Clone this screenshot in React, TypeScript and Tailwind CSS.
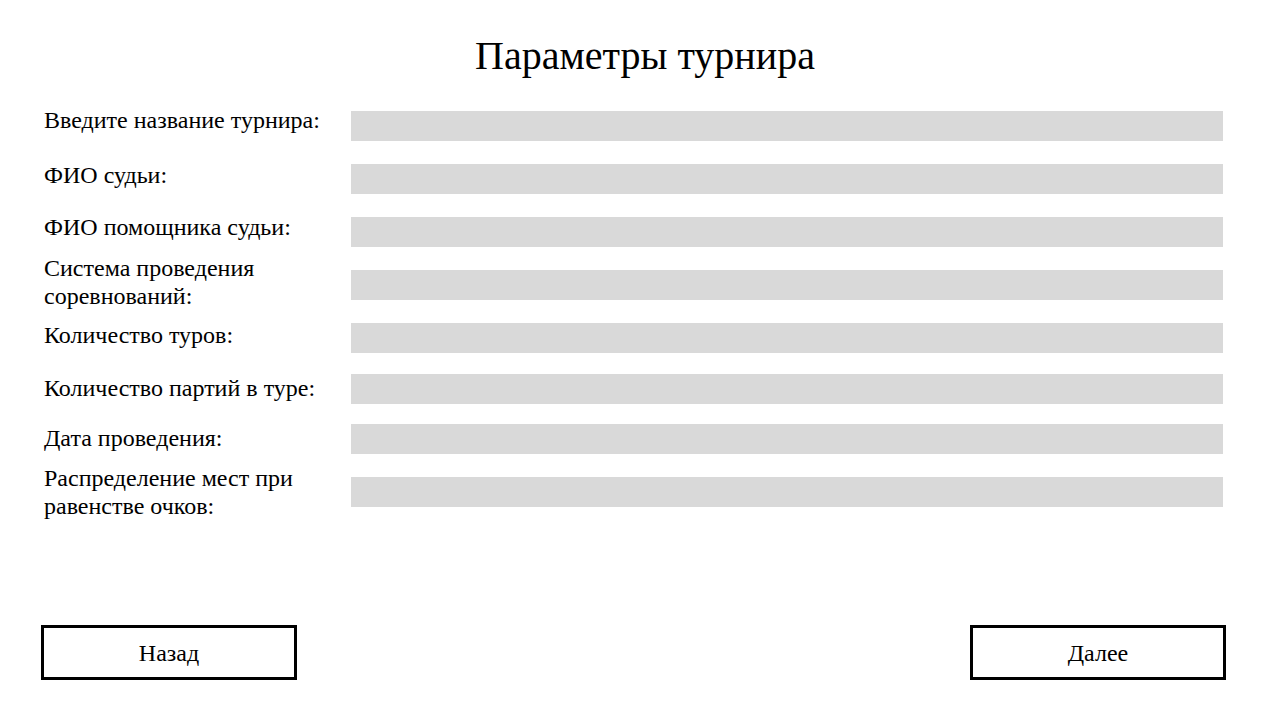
const fields = [
  { label: 'Введите название турнира:', row: 'mt-[27px]', bar: 'mt-[5px]' },
  { label: 'ФИО судьи:', row: 'mt-[20px]', bar: 'mt-[3px]' },
  { label: 'ФИО помощника судьи:', row: 'mt-[19px]', bar: 'mt-[4px]' },
  { label: 'Система проведения соревнований:', row: 'mt-[7px]', bar: 'mt-[16px]' },
  { label: 'Количество туров:', row: 'mt-[11px]', bar: 'mt-[2px]' },
  { label: 'Количество партий в туре:', row: 'mt-[21px]', bar: 'mt-0' },
  { label: 'Дата проведения:', row: 'mt-[20px]', bar: 'mt-0' },
  { label: 'Распределение мест при равенстве очков:', row: 'mt-[10px]', bar: 'mt-[13px]' },
];

export default function App() {
  return (
    <div className="w-[1280px] h-[720px] bg-white text-black flex flex-col font-['Liberation_Serif',serif]">
      <h1 className="pt-[33px] pl-[10px] text-center text-[40px] leading-[46px] font-normal">
        Параметры турнира
      </h1>

      <div className="flex flex-col pl-[44px] pr-[57px]">
        {fields.map((f) => (
          <div key={f.label} className={`flex items-start ${f.row}`}>
            <label className="w-[307px] shrink-0 text-[24px] leading-[28px] pr-[20px]">{f.label}</label>
            <div className={`flex-1 h-[30px] bg-[#d9d9d9] ${f.bar}`} />
          </div>
        ))}
      </div>

      {/* Bottom navigation */}
      <div className="mt-auto flex justify-between pl-[41px] pr-[54px] pb-[40px]">
        <button className="w-[256px] h-[55px] border-[3px] border-black text-[24px] leading-[28px]">Назад</button>
        <button className="w-[256px] h-[55px] border-[3px] border-black text-[24px] leading-[28px]">Далее</button>
      </div>
    </div>
  );
}
